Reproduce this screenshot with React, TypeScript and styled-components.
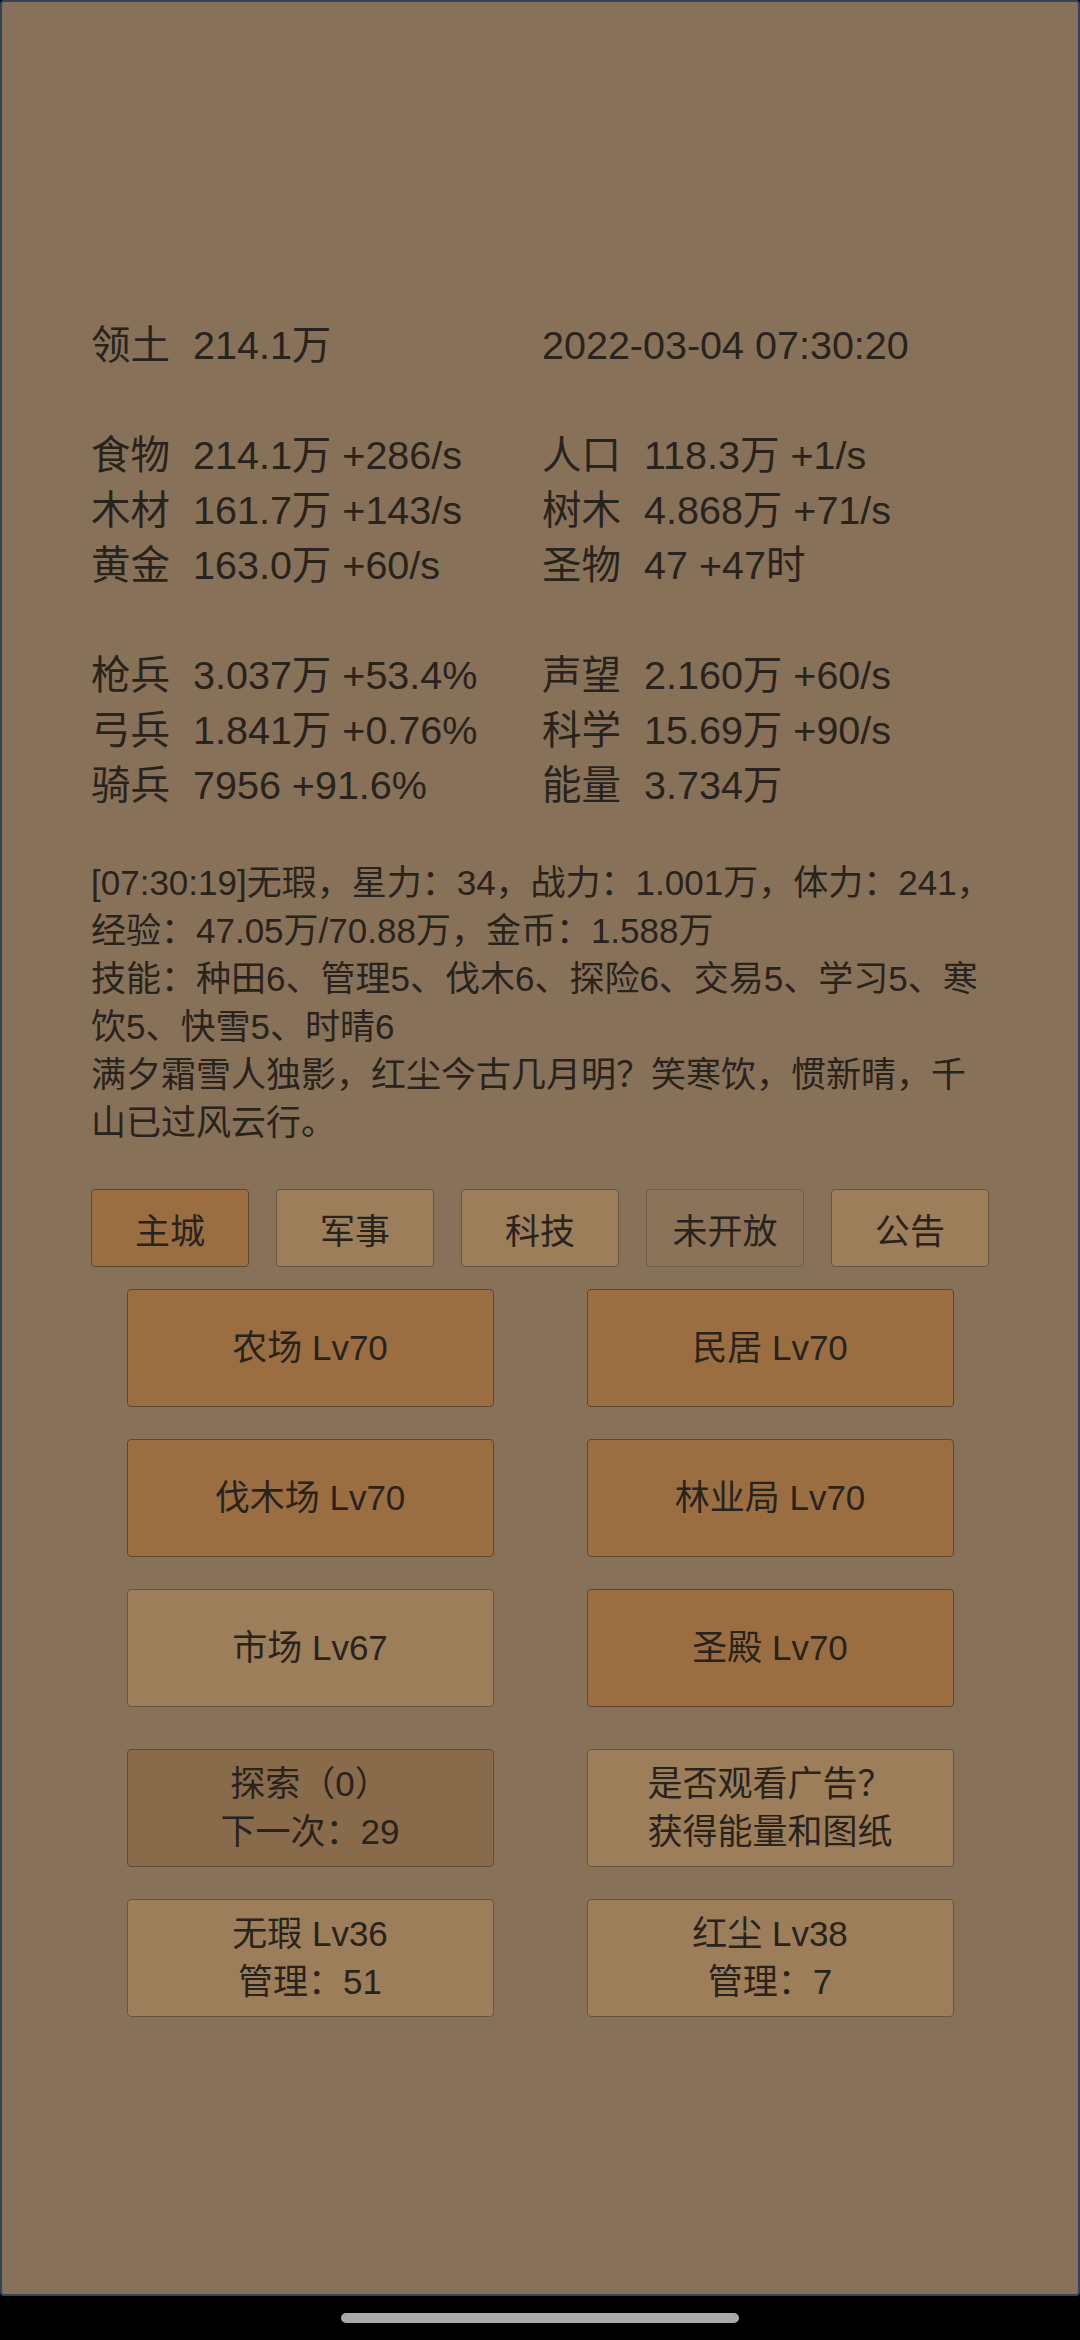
import React from "react";
import styled, { createGlobalStyle } from "styled-components";

const Global = createGlobalStyle`
  html, body {
    margin: 0;
    padding: 0;
    background: #000;
  }
  body {
    font-family: "Liberation Sans", "Noto Sans CJK SC", sans-serif;
    color: #29231d;
  }
  * { box-sizing: border-box; }
`;

const Phone = styled.div`
  width: 1080px;
  height: 2340px;
  display: flex;
  flex-direction: column;
  background: #000;
`;

const Screen = styled.div`
  height: 2296px;
  background: #877159;
  border: 2px solid #33445a;
  border-radius: 4px;
  display: flex;
  flex-direction: column;
  padding: 316px 89px 0;
`;

const NavBar = styled.div`
  flex: 1;
  display: flex;
  justify-content: center;
  padding-top: 17px;
`;

const HomeIndicator = styled.div`
  width: 398px;
  height: 10px;
  border-radius: 5px;
  background: #a9a9a9;
`;

const StatGrid = styled.div`
  display: grid;
  grid-template-columns: 451px 1fr;
  grid-auto-rows: 55px;
  font-size: 39.5px;
  line-height: 55px;
`;

const StatItem = styled.div`
  display: flex;
  gap: 23px;
  white-space: nowrap;
`;

const Label = styled.span`
  width: 79px;
`;

const Spacer = styled.div`
  grid-column: 1 / -1;
`;

const Log = styled.div`
  margin-top: 46px;
  width: 905px;
  font-size: 35px;
  line-height: 48px;
  white-space: pre-line;
`;

const Tabs = styled.div`
  margin-top: 42px;
  display: flex;
  gap: 27px;
`;

type Tone = "active" | "normal" | "muted" | "dark";

const fills: Record<Tone, { bg: string; border: string }> = {
  active: { bg: "#9b6e42", border: "#5f462d" },
  normal: { bg: "#9c7e5a", border: "#6a5640" },
  muted: { bg: "#8a7359", border: "#6e5c48" },
  dark: { bg: "#876b4b", border: "#5f4a34" },
};

const Tab = styled.div<{ $tone: Tone }>`
  width: 158px;
  height: 78px;
  display: flex;
  align-items: center;
  justify-content: center;
  font-size: 35px;
  background: ${(p) => fills[p.$tone].bg};
  border: 1px solid ${(p) => fills[p.$tone].border};
  border-radius: 4px;
`;

const ButtonGrid = styled.div<{ $top: number }>`
  margin-top: ${(p) => p.$top}px;
  display: grid;
  grid-template-columns: 367px 367px;
  justify-content: center;
  column-gap: 93px;
  row-gap: 32px;
`;

const Button = styled.div<{ $tone: Tone }>`
  height: 118px;
  display: flex;
  flex-direction: column;
  align-items: center;
  justify-content: center;
  text-align: center;
  font-size: 35px;
  line-height: 48px;
  background: ${(p) => fills[p.$tone].bg};
  border: 1px solid ${(p) => fills[p.$tone].border};
  border-radius: 4px;
  white-space: nowrap;
`;

const stats: ([string, string] | null)[][] = [
  [["领土", "214.1万"], ["", "2022-03-04 07:30:20"]],
  [],
  [["食物", "214.1万 +286/s"], ["人口", "118.3万 +1/s"]],
  [["木材", "161.7万 +143/s"], ["树木", "4.868万 +71/s"]],
  [["黄金", "163.0万 +60/s"], ["圣物", "47 +47时"]],
  [],
  [["枪兵", "3.037万 +53.4%"], ["声望", "2.160万 +60/s"]],
  [["弓兵", "1.841万 +0.76%"], ["科学", "15.69万 +90/s"]],
  [["骑兵", "7956 +91.6%"], ["能量", "3.734万"]],
];

const logText =
  "[07:30:19]无瑕，星力：34，战力：1.001万，体力：241，经验：47.05万/70.88万，金币：1.588万\n" +
  "技能：种田6、管理5、伐木6、探险6、交易5、学习5、寒饮5、快雪5、时晴6\n" +
  "满夕霜雪人独影，红尘今古几月明？笑寒饮，惯新晴，千山已过风云行。";

const tabs: [string, Tone][] = [
  ["主城", "active"],
  ["军事", "normal"],
  ["科技", "normal"],
  ["未开放", "muted"],
  ["公告", "normal"],
];

const buildings: [string, Tone][] = [
  ["农场 Lv70", "active"],
  ["民居 Lv70", "active"],
  ["伐木场 Lv70", "active"],
  ["林业局 Lv70", "active"],
  ["市场 Lv67", "normal"],
  ["圣殿 Lv70", "active"],
];

const actions: [string[], Tone][] = [
  [["探索（0）", "下一次：29"], "dark"],
  [["是否观看广告？", "获得能量和图纸"], "normal"],
  [["无瑕 Lv36", "管理：51"], "normal"],
  [["红尘 Lv38", "管理：7"], "normal"],
];

export default function App() {
  return (
    <>
      <Global />
      <Phone>
        <Screen>
          <StatGrid>
            {stats.map((row, i) =>
              row.length === 0 ? (
                <Spacer key={i} />
              ) : (
                row.map((cell, j) => (
                  <StatItem key={`${i}-${j}`}>
                    {cell && cell[0] ? <Label>{cell[0]}</Label> : null}
                    <span>{cell ? cell[1] : ""}</span>
                  </StatItem>
                ))
              )
            )}
          </StatGrid>
          <Log>{logText}</Log>
          <Tabs>
            {tabs.map(([t, tone]) => (
              <Tab key={t} $tone={tone}>
                {t}
              </Tab>
            ))}
          </Tabs>
          <ButtonGrid $top={22}>
            {buildings.map(([t, tone]) => (
              <Button key={t} $tone={tone}>
                {t}
              </Button>
            ))}
          </ButtonGrid>
          <ButtonGrid $top={42}>
            {actions.map(([lines, tone]) => (
              <Button key={lines[0]} $tone={tone}>
                {lines.map((l) => (
                  <div key={l}>{l}</div>
                ))}
              </Button>
            ))}
          </ButtonGrid>
        </Screen>
        <NavBar>
          <HomeIndicator />
        </NavBar>
      </Phone>
    </>
  );
}
